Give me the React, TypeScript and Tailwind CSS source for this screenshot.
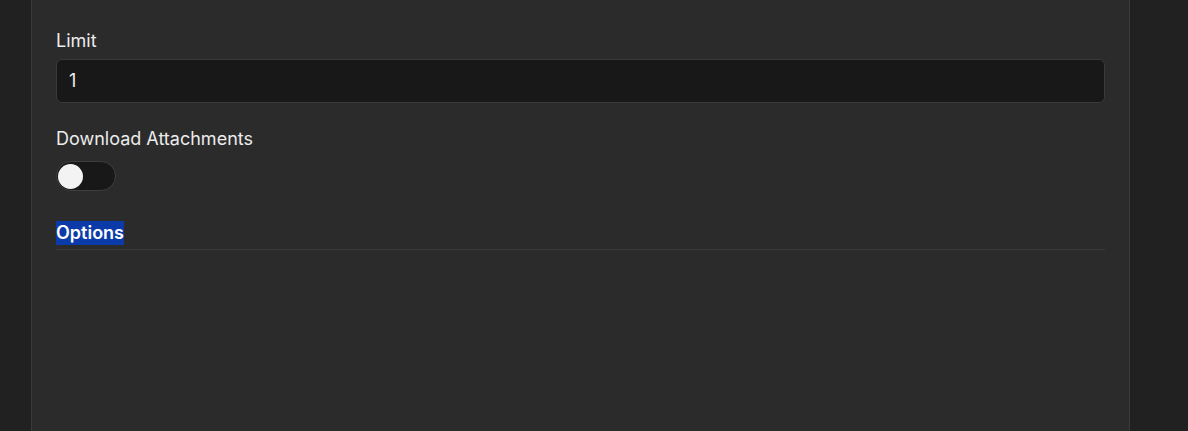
export default function App() {
  return (
    <div className="flex h-[431px] w-full bg-[#212121] font-['Inter',sans-serif] text-[#ececec]">
      <div className="w-[31px] shrink-0" />
      <div className="w-[1099px] shrink-0 border-x border-[#3a3a3a] bg-[#2b2b2b] px-6 pt-[29px]">
        <label className="block text-lg leading-6">Limit</label>
        <div className="mt-[6px] flex h-11 items-center rounded-md border border-[#3a3a3a] bg-[#181818] px-3 text-lg">
          1
        </div>

        <label className="mt-6 block text-lg leading-6">Download Attachments</label>
        <div className="mt-[10px] flex h-[30px] w-[60px] items-center rounded-full border border-[#3e3e3e] bg-[#181818] px-[1px]">
          <div className="h-[25px] w-[25px] rounded-full bg-[#f3f3f3]" />
        </div>

        <div className="mt-[30px] border-b border-[#3a3a3a] pb-1">
          <span className="inline-block bg-[#0b3ba8] text-lg font-semibold leading-6 text-white">Options</span>
        </div>
      </div>
    </div>
  );
}
